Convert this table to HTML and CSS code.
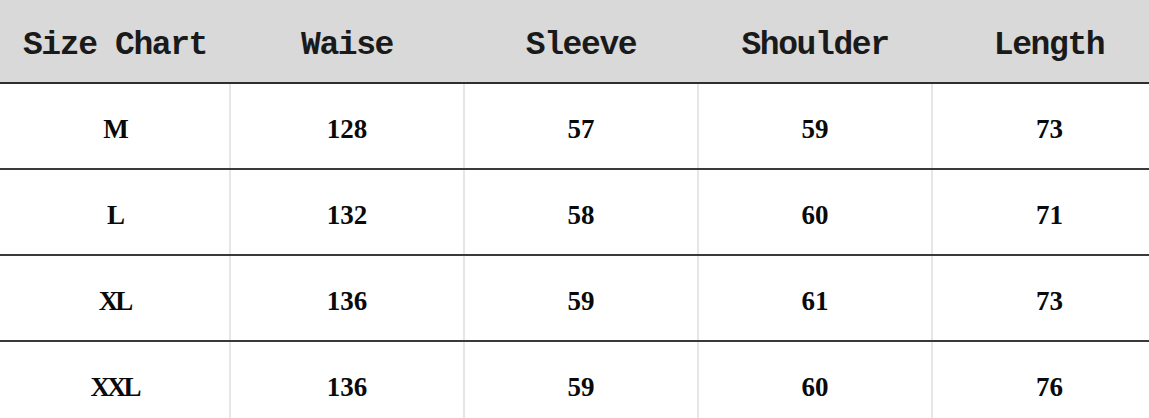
FILE: index.html
```html
<!DOCTYPE html>
<html lang="en">
<head>
<meta charset="utf-8">
<title>Size Chart</title>
<link rel="stylesheet" href="styles.css">
</head>
<body>
<div class="sheet">
  <table class="chart">
    <colgroup>
      <col class="c-first">
      <col class="c-col">
      <col class="c-col">
      <col class="c-col">
      <col class="c-col">
    </colgroup>
    <thead>
      <tr>
        <th>Size Chart</th>
        <th>Waise</th>
        <th>Sleeve</th>
        <th>Shoulder</th>
        <th>Length</th>
      </tr>
    </thead>
    <tbody>
      <tr><td class="size">M</td><td>128</td><td>57</td><td>59</td><td>73</td></tr>
      <tr><td class="size">L</td><td>132</td><td>58</td><td>60</td><td>71</td></tr>
      <tr><td class="size">XL</td><td>136</td><td>59</td><td>61</td><td>73</td></tr>
      <tr><td class="size">XXL</td><td>136</td><td>59</td><td>60</td><td>76</td></tr>
    </tbody>
  </table>
</div>
</body>
</html>
```

FILE: styles.css
```css
html, body {
  margin: 0;
  padding: 0;
  background: #ffffff;
}

.sheet {
  width: 1149px;
  height: 418px;
  overflow: hidden;
}

.chart {
  border-collapse: collapse;
  table-layout: fixed;
  width: 1166px;
}

.c-first { width: 230px; }
.c-col { width: 234px; }

.chart th {
  height: 83px;
  padding: 8px 0 0 0;
  background: #d9d9d9;
  color: #1a1a1a;
  font-family: "Liberation Mono", "Courier New", monospace;
  font-weight: bold;
  font-size: 33px;
  letter-spacing: -1.4px;
  text-align: center;
  vertical-align: middle;
  border-bottom: 2px solid #2e2e2e;
  box-sizing: border-box;
}

.chart td {
  height: 86px;
  padding: 7px 0 0 0;
  color: #0a0a0a;
  font-family: "Liberation Serif", "Times New Roman", serif;
  font-weight: bold;
  font-size: 27px;
  text-align: center;
  vertical-align: middle;
  border-bottom: 2px solid #3a3a3a;
  border-left: 2px solid #e6e6e6;
  box-sizing: border-box;
}

.chart td:first-child {
  border-left: none;
}

.chart td.size {
  letter-spacing: -3px;
}
```
